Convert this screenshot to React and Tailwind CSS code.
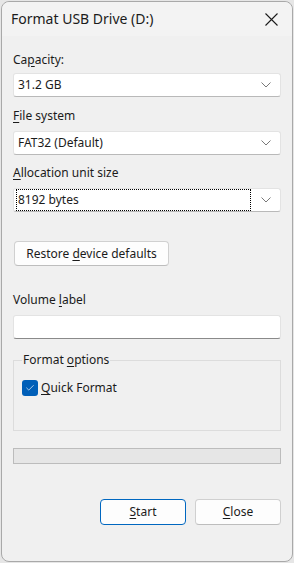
import { Check } from 'lucide-react'

function Chevron() {
  return (
    <svg width="10" height="6" viewBox="0 0 10 6" className="shrink-0">
      <path d="M0.5 0.5 L5 5 L9.5 0.5" fill="none" stroke="#6a6a6a" strokeWidth="0.9" />
    </svg>
  )
}

function Select({ value, focused }) {
  return (
    <div className="flex items-center h-[24px] bg-white border border-[#e3e3e3] border-b-[#b9b9b9] rounded-[3px] pl-[3px] pr-[9px]">
      <div className={`flex-1 h-[20px] flex items-center px-[1px] mr-[11px] ${focused ? 'outline outline-1 outline-dotted outline-black' : ''}`}>
        {value}
      </div>
      <Chevron />
    </div>
  )
}

const U = ({ children }) => <span className="underline underline-offset-2">{children}</span>

export default function App() {
  return (
    <div className="w-[294px] h-[563px] bg-[#e6e6e6] pl-[1px] pt-[1px] font-['Noto_Sans',sans-serif] text-[12px] leading-[16px] text-[#1b1b1b]">
      <div className="w-[292px] h-[561px] bg-[#f0f0f0] border border-[#a9a9a9] rounded-[8px] flex flex-col">
        <div className="h-[34px] flex items-center justify-between pl-[9px] pr-[14px] bg-[#f3f3f3] rounded-t-[8px]">
          <span className="text-[14px]">Format USB Drive (D:)</span>
          <svg width="13" height="13" viewBox="0 0 13 13">
            <path d="M0.5 0.5 L12.5 12.5 M12.5 0.5 L0.5 12.5" stroke="#1b1b1b" strokeWidth="1.1" fill="none" />
          </svg>
        </div>
        <div className="flex flex-col pl-[11px] pr-[11px]">
          <div className="mt-[16px]">Ca<U>p</U>acity:</div>
          <div className="mt-[5px]"><Select value="31.2 GB" /></div>
          <div className="mt-[11px]"><U>F</U>ile system</div>
          <div className="mt-[7px]"><Select value="FAT32 (Default)" /></div>
          <div className="mt-[10px]"><U>A</U>llocation unit size</div>
          <div className="mt-[7px]"><Select value="8192 bytes" focused /></div>
          <button className="mt-[29px] ml-[1px] w-[155px] h-[25px] bg-[#fdfdfd] border border-[#d0d0d0] border-b-[#bdbdbd] rounded-[4px] text-center">
            Restore <U>d</U>evice defaults
          </button>
          <div className="mt-[26px]">Volume <U>l</U>abel</div>
          <div className="mt-[7px] h-[24px] bg-white border border-[#e3e3e3] border-b-[#8a8a8a] rounded-[3px]" />
          <div className="relative mt-[21px] h-[71px] border border-[#dcdcdc] pl-[8px] pt-[19px]">
            <span className="absolute left-[8px] -top-[9px] bg-[#f0f0f0] px-[1px]">Format <U>o</U>ptions</span>
            <div className="flex items-center gap-[3px]">
              <span className="w-[16px] h-[16px] rounded-[3px] bg-[#005fb8] flex items-center justify-center">
                <Check size={10} strokeWidth={1.6} color="#ffffff" />
              </span>
              <span><U>Q</U>uick Format</span>
            </div>
          </div>
          <div className="mt-[17px] h-[16px] bg-[#e6e6e6] border border-[#bcbcbc]" />
          <div className="mt-[35px] flex justify-end gap-[9px]">
            <button className="w-[86px] h-[26px] bg-[#fdfdfd] border border-[#0067c0] rounded-[4px]">
              <U>S</U>tart
            </button>
            <button className="w-[86px] h-[26px] bg-[#fdfdfd] border border-[#d0d0d0] border-b-[#bdbdbd] rounded-[4px]">
              <U>C</U>lose
            </button>
          </div>
        </div>
      </div>
    </div>
  )
}
